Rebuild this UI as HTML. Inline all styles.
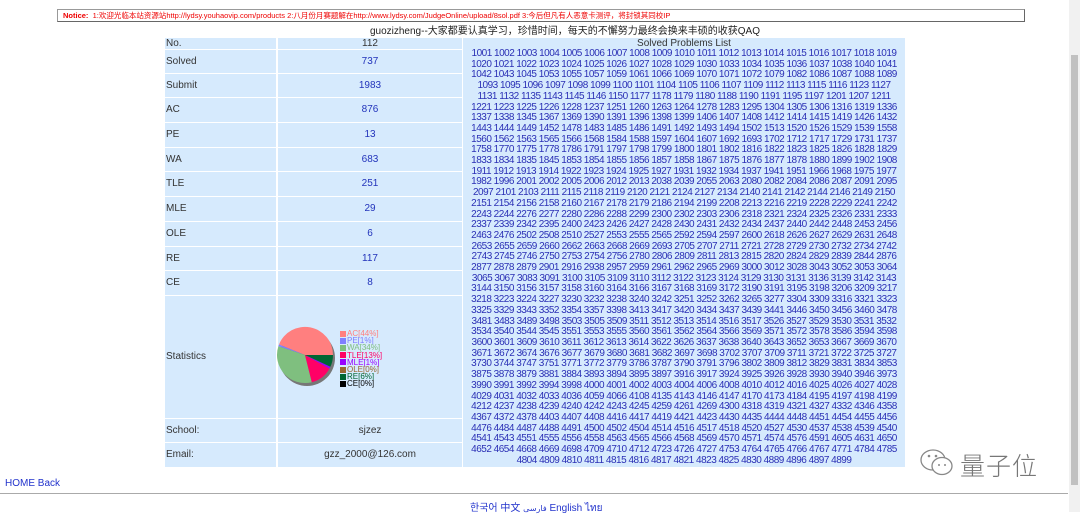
<!DOCTYPE html>
<html><head><meta charset="utf-8"><style>
*{margin:0;padding:0;box-sizing:border-box}
body{width:1080px;height:512px;background:#fff;font-family:"Liberation Sans","Noto Sans CJK SC",sans-serif;position:relative;overflow:hidden;color:#333}
.a{position:absolute}
.notice{left:57px;top:9px;width:968px;height:13px;border:1px solid #999;border-right-color:#666;border-bottom-color:#666;color:#e00;font-size:7.5px;line-height:11px;padding-left:5px;white-space:nowrap;overflow:hidden}
.title{left:195px;width:740px;top:25px;text-align:center;font-size:10px;line-height:13px;color:#222}
.cell{position:absolute;background:#d6eafd;font-size:10px;color:#333}
.lab{left:165px;width:111px;padding-left:1px}
.val{left:278px;width:184px;text-align:center;color:#2233bb}
.list{left:463px;width:442px;top:49px;height:418px;text-align:center;color:#2a2fb5;font-size:10px;letter-spacing:-0.5px;line-height:10.7px;white-space:nowrap}
.lg{font-size:8px;line-height:7.2px;letter-spacing:0}
.lg span{display:block}
.lg i{display:inline-block;width:6px;height:6px;margin-right:1px;vertical-align:-0.5px}
</style></head><body>
<div class="a notice"><b>Notice:</b> &nbsp;1:欢迎光临本站资源站http://lydsy.youhaovip.com/products 2:八月份月赛题解在http://www.lydsy.com/JudgeOnline/upload/8sol.pdf 3:今后但凡有人恶意卡测评，将封锁其同校IP</div>
<div class="a title">guozizheng--大家都要认真学习，珍惜时间，每天的不懈努力最终会换来丰硕的收获QAQ</div>

<div class="cell lab" style="top:38px;height:11px;line-height:11px">No.</div>
<div class="cell val" style="top:38px;height:11px;line-height:11px;color:#333">112</div>
<div class="cell" style="left:463px;width:442px;top:38px;height:11px;line-height:11px;text-align:center">Solved Problems List</div>

<div class="cell lab" style="top:50px;height:23px;line-height:23px">Solved</div><div class="cell val" style="top:50px;height:23px;line-height:23px">737</div>
<div class="cell lab" style="top:74px;height:23px;line-height:23px">Submit</div><div class="cell val" style="top:74px;height:23px;line-height:23px">1983</div>
<div class="cell lab" style="top:98px;height:24px;line-height:24px">AC</div><div class="cell val" style="top:98px;height:24px;line-height:24px">876</div>
<div class="cell lab" style="top:123px;height:24px;line-height:24px">PE</div><div class="cell val" style="top:123px;height:24px;line-height:24px">13</div>
<div class="cell lab" style="top:148px;height:23px;line-height:23px">WA</div><div class="cell val" style="top:148px;height:23px;line-height:23px">683</div>
<div class="cell lab" style="top:172px;height:24px;line-height:24px">TLE</div><div class="cell val" style="top:172px;height:24px;line-height:24px">251</div>
<div class="cell lab" style="top:197px;height:24px;line-height:24px">MLE</div><div class="cell val" style="top:197px;height:24px;line-height:24px">29</div>
<div class="cell lab" style="top:222px;height:24px;line-height:24px">OLE</div><div class="cell val" style="top:222px;height:24px;line-height:24px">6</div>
<div class="cell lab" style="top:247px;height:23px;line-height:23px">RE</div><div class="cell val" style="top:247px;height:23px;line-height:23px">117</div>
<div class="cell lab" style="top:271px;height:24px;line-height:24px">CE</div><div class="cell val" style="top:271px;height:24px;line-height:24px">8</div>
<div class="cell lab" style="top:296px;height:122px;line-height:122px">Statistics</div>
<div class="cell val" style="top:296px;height:122px"></div>
<div class="cell lab" style="top:419px;height:23px;line-height:23px">School:</div><div class="cell val" style="top:419px;height:23px;line-height:23px;color:#333">sjzez</div>
<div class="cell lab" style="top:443px;height:24px;line-height:24px">Email:</div><div class="cell val" style="top:443px;height:24px;line-height:24px;color:#333">gzz_2000@126.com</div>

<svg class="a" style="left:270px;top:320px" width="70" height="72" viewBox="270 320 70 72">
<circle cx="307" cy="358" r="28" fill="#777"/>
<path d="M305,355 L333,355 A28,28 0 0 0 279,344.5Z" fill="#ff7f7f"/>
<path d="M305,355 L279,344.5 A28,28 0 0 0 278.4,346.3Z" fill="#7f7fff"/>
<path d="M305,355 L278.4,346.3 A28,28 0 0 0 311.8,382.2Z" fill="#7fbf7f"/>
<path d="M305,355 L311.8,382.2 A28,28 0 0 0 329.5,368.6Z" fill="#ff0066"/>
<path d="M305,355 L329.5,368.6 A28,28 0 0 0 330.4,366.8Z" fill="#9900ff"/>
<path d="M305,355 L330.4,366.8 A28,28 0 0 0 333,355Z" fill="#006633"/>
</svg>
<div class="a lg" style="left:340px;top:330px">
<span style="color:#ff7f7f"><i style="background:#ff7f7f"></i>AC[44%]</span>
<span style="color:#7f7fff"><i style="background:#7f7fff"></i>PE[1%]</span>
<span style="color:#7fbf7f"><i style="background:#7fbf7f"></i>WA[34%]</span>
<span style="color:#ff0066"><i style="background:#ff0066"></i>TLE[13%]</span>
<span style="color:#9900ff"><i style="background:#9900ff"></i>MLE[1%]</span>
<span style="color:#996633"><i style="background:#996633"></i>OLE[0%]</span>
<span style="color:#006633"><i style="background:#006633"></i>RE[6%]</span>
<span style="color:#000"><i style="background:#000"></i>CE[0%]</span>
</div>

<div class="cell list">1001 1002 1003 1004 1005 1006 1007 1008 1009 1010 1011 1012 1013 1014 1015 1016 1017 1018 1019<br>1020 1021 1022 1023 1024 1025 1026 1027 1028 1029 1030 1033 1034 1035 1036 1037 1038 1040 1041<br>1042 1043 1045 1053 1055 1057 1059 1061 1066 1069 1070 1071 1072 1079 1082 1086 1087 1088 1089<br>1093 1095 1096 1097 1098 1099 1100 1101 1104 1105 1106 1107 1109 1112 1113 1115 1116 1123 1127<br>1131 1132 1135 1143 1145 1146 1150 1177 1178 1179 1180 1188 1190 1191 1195 1197 1201 1207 1211<br>1221 1223 1225 1226 1228 1237 1251 1260 1263 1264 1278 1283 1295 1304 1305 1306 1316 1319 1336<br>1337 1338 1345 1367 1369 1390 1391 1396 1398 1399 1406 1407 1408 1412 1414 1415 1419 1426 1432<br>1443 1444 1449 1452 1478 1483 1485 1486 1491 1492 1493 1494 1502 1513 1520 1526 1529 1539 1558<br>1560 1562 1563 1565 1566 1568 1584 1588 1597 1604 1607 1692 1693 1702 1712 1717 1729 1731 1737<br>1758 1770 1775 1778 1786 1791 1797 1798 1799 1800 1801 1802 1816 1822 1823 1825 1826 1828 1829<br>1833 1834 1835 1845 1853 1854 1855 1856 1857 1858 1867 1875 1876 1877 1878 1880 1899 1902 1908<br>1911 1912 1913 1914 1922 1923 1924 1925 1927 1931 1932 1934 1937 1941 1951 1966 1968 1975 1977<br>1982 1996 2001 2002 2005 2006 2012 2013 2038 2039 2055 2063 2080 2082 2084 2086 2087 2091 2095<br>2097 2101 2103 2111 2115 2118 2119 2120 2121 2124 2127 2134 2140 2141 2142 2144 2146 2149 2150<br>2151 2154 2156 2158 2160 2167 2178 2179 2186 2194 2199 2208 2213 2216 2219 2228 2229 2241 2242<br>2243 2244 2276 2277 2280 2286 2288 2299 2300 2302 2303 2306 2318 2321 2324 2325 2326 2331 2333<br>2337 2339 2342 2395 2400 2423 2426 2427 2428 2430 2431 2432 2434 2437 2440 2442 2448 2453 2456<br>2463 2476 2502 2508 2510 2527 2553 2555 2565 2592 2594 2597 2600 2618 2626 2627 2629 2631 2648<br>2653 2655 2659 2660 2662 2663 2668 2669 2693 2705 2707 2711 2721 2728 2729 2730 2732 2734 2742<br>2743 2745 2746 2750 2753 2754 2756 2780 2806 2809 2811 2813 2815 2820 2824 2829 2839 2844 2876<br>2877 2878 2879 2901 2916 2938 2957 2959 2961 2962 2965 2969 3000 3012 3028 3043 3052 3053 3064<br>3065 3067 3083 3091 3100 3105 3109 3110 3112 3122 3123 3124 3129 3130 3131 3136 3139 3142 3143<br>3144 3150 3156 3157 3158 3160 3164 3166 3167 3168 3169 3172 3190 3191 3195 3198 3206 3209 3217<br>3218 3223 3224 3227 3230 3232 3238 3240 3242 3251 3252 3262 3265 3277 3304 3309 3316 3321 3323<br>3325 3329 3343 3352 3354 3357 3398 3413 3417 3420 3434 3437 3439 3441 3446 3450 3456 3460 3478<br>3481 3483 3489 3498 3503 3505 3509 3511 3512 3513 3514 3516 3517 3526 3527 3529 3530 3531 3532<br>3534 3540 3544 3545 3551 3553 3555 3560 3561 3562 3564 3566 3569 3571 3572 3578 3586 3594 3598<br>3600 3601 3609 3610 3611 3612 3613 3614 3622 3626 3637 3638 3640 3643 3652 3653 3667 3669 3670<br>3671 3672 3674 3676 3677 3679 3680 3681 3682 3697 3698 3702 3707 3709 3711 3721 3722 3725 3727<br>3730 3744 3747 3751 3771 3772 3779 3786 3787 3790 3791 3796 3802 3809 3812 3829 3831 3834 3853<br>3875 3878 3879 3881 3884 3893 3894 3895 3897 3916 3917 3924 3925 3926 3928 3930 3940 3946 3973<br>3990 3991 3992 3994 3998 4000 4001 4002 4003 4004 4006 4008 4010 4012 4016 4025 4026 4027 4028<br>4029 4031 4032 4033 4036 4059 4066 4108 4135 4143 4146 4147 4170 4173 4184 4195 4197 4198 4199<br>4212 4237 4238 4239 4240 4242 4243 4245 4259 4261 4269 4300 4318 4319 4321 4327 4332 4346 4358<br>4367 4372 4378 4403 4407 4408 4416 4417 4419 4421 4423 4430 4435 4444 4448 4451 4454 4455 4456<br>4476 4484 4487 4488 4491 4500 4502 4504 4514 4516 4517 4518 4520 4527 4530 4537 4538 4539 4540<br>4541 4543 4551 4555 4556 4558 4563 4565 4566 4568 4569 4570 4571 4574 4576 4591 4605 4631 4650<br>4652 4654 4668 4669 4698 4709 4710 4712 4723 4726 4727 4753 4764 4765 4766 4767 4771 4784 4785<br>4804 4809 4810 4811 4815 4816 4817 4821 4823 4825 4830 4889 4896 4897 4899</div>

<svg class="a" style="left:918px;top:446px" width="40" height="34" viewBox="0 0 40 34">
<ellipse cx="15" cy="14" rx="12" ry="10" fill="none" stroke="#888" stroke-width="1.3"/>
<ellipse cx="24" cy="20" rx="10" ry="8.5" fill="#fff" stroke="#888" stroke-width="1.3"/>
<circle cx="11" cy="10" r="1.3" fill="#888"/><circle cx="18" cy="10" r="1.3" fill="#888"/>
<circle cx="21" cy="19" r="1" fill="#888"/><circle cx="27" cy="19" r="1" fill="#888"/>
</svg>
<div class="a" style="left:960px;top:447px;font-size:25px;color:#777;letter-spacing:1px;font-family:'Noto Sans CJK SC',sans-serif;font-weight:300">量子位</div>

<div class="a" style="left:5px;top:478px;font-size:10px;color:#2233cc">HOME Back</div>
<div class="a" style="left:0;top:493px;width:1068px;height:1px;background:#aaa"></div>
<div class="a" style="left:470px;top:499px;font-size:10px;color:#2233cc;font-family:'Liberation Sans','Noto Sans CJK KR','Noto Sans CJK SC','DejaVu Sans',sans-serif">한국어 中文 <span style="font-size:8px">فارسی</span> English ไทย</div>

<div class="a" style="left:1069px;top:0;width:11px;height:512px;background:#f1f1f1"></div>
<div class="a" style="left:1071px;top:55px;width:7px;height:430px;background:#c1c1c1"></div>
</body></html>
